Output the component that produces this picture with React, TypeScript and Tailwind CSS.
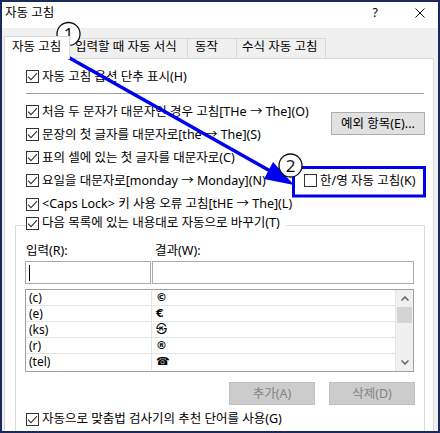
import React from "react";

const BLUE = "#0000ee";

function Box({ checked }: { checked?: boolean }) {
  return (
    <span className="flex h-[13px] w-[13px] shrink-0 items-center justify-center border border-[#333333] bg-white">
      {checked ? (
        <svg width="11" height="11" viewBox="0 0 11 11">
          <path d="M1 5.6 L4 8.6 L10 2.2" fill="none" stroke="#333333" strokeWidth="1.1" />
        </svg>
      ) : null}
    </span>
  );
}

function Check({ label, checked = true, className = "" }: { label: string; checked?: boolean; className?: string }) {
  return (
    <div className={"flex shrink-0 items-center " + className}>
      <Box checked={checked} />
      <span className="ml-[3px] whitespace-nowrap">{label}</span>
    </div>
  );
}

const rows = [
  ["(c)", "©"],
  ["(e)", "€"],
  ["(ks)", "㉿"],
  ["(r)", "®"],
  ["(tel)", "☎"],
];

export default function App() {
  return (
    <div className="relative h-[433px] w-[440px] overflow-hidden bg-[#f0f0f0] font-['Noto_Sans','Noto_Sans_CJK_KR',sans-serif] text-[12.5px] leading-[16px] text-black">
      <div className="flex h-full flex-col border-2 border-[#1b2a5c]">
        {/* title bar */}
        <div className="flex h-[26px] shrink-0 items-center bg-white pb-[4px] pl-[3px]">
          <span>자동 고침</span>
          <span className="ml-auto">?</span>
          <svg className="ml-[37px] mr-[13px]" width="10" height="10" viewBox="0 0 10 10">
            <path d="M0.5 0.5 L9.5 9.5 M9.5 0.5 L0.5 9.5" stroke="#111" strokeWidth="1" />
          </svg>
        </div>

        {/* tabs */}
        <div className="ml-[2px] mt-[8px] flex h-[22px] shrink-0 items-end">
          <div className="relative z-10 -mb-px flex h-[23px] w-[66px] items-start border-x border-t border-[#d9d9d9] bg-white pl-[7px] pt-[2px]">
            자동 고침
          </div>
          <div className="flex h-[20px] w-[118px] items-start border-r border-t border-[#d9d9d9] pl-[5px]">
            입력할 때 자동 서식
          </div>
          <div className="flex h-[20px] w-[49px] items-start border-r border-t border-[#d9d9d9] pl-[7px]">
            동작
          </div>
          <div className="flex h-[20px] w-[89px] items-start border-r border-t border-[#d9d9d9] pl-[5px]">
            수식 자동 고침
          </div>
        </div>

        {/* panel */}
        <div className="ml-[2px] min-h-0 w-[430px] flex-1 overflow-hidden border-x border-t border-[#d9d9d9] bg-white pt-[6px]">
          <Check className="h-[23px] pl-[21px]" label="자동 고침 옵션 단추 표시(H)" />
          <div className="ml-[21px] mr-[9px] mt-[5px] h-px bg-[#a0a0a0]" />

          <div className="mt-[6px] flex pl-[21px]">
            <div className="flex flex-col">
              <Check className="h-[23px]" label="처음 두 문자가 대문자인 경우 고침[THe → The](O)" />
              <Check className="h-[23px]" label="문장의 첫 글자를 대문자로[the → The](S)" />
            </div>
            <button className="ml-auto mr-[8px] mt-[12px] flex h-[23px] w-[94px] items-center justify-center border border-[#adadad] bg-[#e1e1e1]">
              예외 항목(E)...
            </button>
          </div>
          <Check className="h-[23px] pl-[21px]" label="표의 셀에 있는 첫 글자를 대문자로(C)" />
          <div className="flex h-[23px] items-center pl-[21px]">
            <div className="w-[278px] shrink-0">
              <Check label="요일을 대문자로[monday → Monday](N)" />
            </div>
            <Check checked={false} label="한/영 자동 고침(K)" />
          </div>
          <Check className="h-[24px] pl-[21px]" label="<Caps Lock> 키 사용 오류 고침[tHE → The](L)" />

          {/* group box */}
          <div className="ml-[10px] mr-[8px] mt-[9px] border border-[#dcdcdc] pb-[40px]">
            <div className="-mt-[11px] ml-[10px] flex h-[16px] w-fit items-center bg-white pr-[6px]">
              <Box checked />
              <span className="ml-[3px] whitespace-nowrap">다음 목록에 있는 내용대로 자동으로 바꾸기(T)</span>
            </div>

            <div className="mt-[12px] flex h-[16px] pl-[10px]">
              <span className="w-[129px]">입력(R):</span>
              <span>결과(W):</span>
            </div>

            <div className="ml-[9px] mt-[2px] flex gap-[1px]">
              <div className="flex h-[23px] w-[126px] items-center border border-[#ababab] pl-[3px]">
                <div className="h-[16px] w-px bg-black" />
              </div>
              <div className="h-[23px] w-[262px] border border-[#ababab]" />
            </div>

            <div className="ml-[9px] mt-[5px] flex h-[83px] w-[389px] border border-[#a0a0a0] text-[12px]">
              <div className="flex w-[370px] flex-col border-r border-[#e6e6e6]">
                {rows.map(([a, b], i) => (
                  <div key={i} className={"flex h-[16px] shrink-0 " + (i < 4 ? "border-b border-[#e3e3e3]" : "")}>
                    <div className="flex w-[126px] items-center border-r border-[#e3e3e3] pl-[3px]">{a}</div>
                    <div className="flex items-center pl-[4px] font-['DejaVu_Sans','Noto_Sans_CJK_KR',sans-serif] text-[11px] font-bold">
                      {b}
                    </div>
                  </div>
                ))}
              </div>
              <div className="flex w-[17px] flex-col bg-[#f0f0f0]">
                <div className="flex h-[17px] items-center justify-center">
                  <svg width="8" height="5" viewBox="0 0 8 5">
                    <polyline points="0.5,4.5 4,1 7.5,4.5" fill="none" stroke="#606060" strokeWidth="1.5" />
                  </svg>
                </div>
                <div className="mx-[1px] h-[16px] bg-[#d4d4d4]" />
                <div className="mt-auto flex h-[17px] items-center justify-center">
                  <svg width="8" height="5" viewBox="0 0 8 5">
                    <polyline points="0.5,0.5 4,4 7.5,0.5" fill="none" stroke="#606060" strokeWidth="1.5" />
                  </svg>
                </div>
              </div>
            </div>

            <div className="mr-[9px] mt-[10px] flex justify-end gap-[14px]">
              <div className="flex h-[23px] w-[86px] items-center justify-center border border-[#bfbfbf] bg-[#cccccc] text-[#838383]">
                추가(A)
              </div>
              <div className="flex h-[23px] w-[86px] items-center justify-center border border-[#bfbfbf] bg-[#cccccc] text-[#838383]">
                삭제(D)
              </div>
            </div>

            <Check className="mt-[6px] h-[16px] pl-[10px]" label="자동으로 맞춤법 검사기의 추천 단어를 사용(G)" />
          </div>
        </div>
      </div>

      {/* annotations */}
      <svg className="pointer-events-none absolute left-0 top-0" width="440" height="433" viewBox="0 0 440 433">
        <rect x="6.5" y="37.5" width="60" height="17" fill="none" stroke={BLUE} strokeWidth="3" />
        <line x1="66" y1="56" x2="272" y2="172" stroke={BLUE} strokeWidth="3.5" />
        <polygon points="294,185 264,179 273,162" fill={BLUE} />
        <rect x="293.5" y="167.5" width="131" height="28.5" fill="none" stroke={BLUE} strokeWidth="3" />
        <circle cx="68.5" cy="34" r="11.5" fill="white" stroke="#111" strokeWidth="1.3" />
        <text x="68.5" y="40" textAnchor="middle" fontSize="17" fontFamily="Noto Sans, sans-serif" fill="#111">
          1
        </text>
        <circle cx="290.5" cy="165.5" r="11.5" fill="white" stroke="#111" strokeWidth="1.3" />
        <text x="290.5" y="171.5" textAnchor="middle" fontSize="17" fontFamily="Noto Sans, sans-serif" fill="#111">
          2
        </text>
      </svg>
    </div>
  );
}
